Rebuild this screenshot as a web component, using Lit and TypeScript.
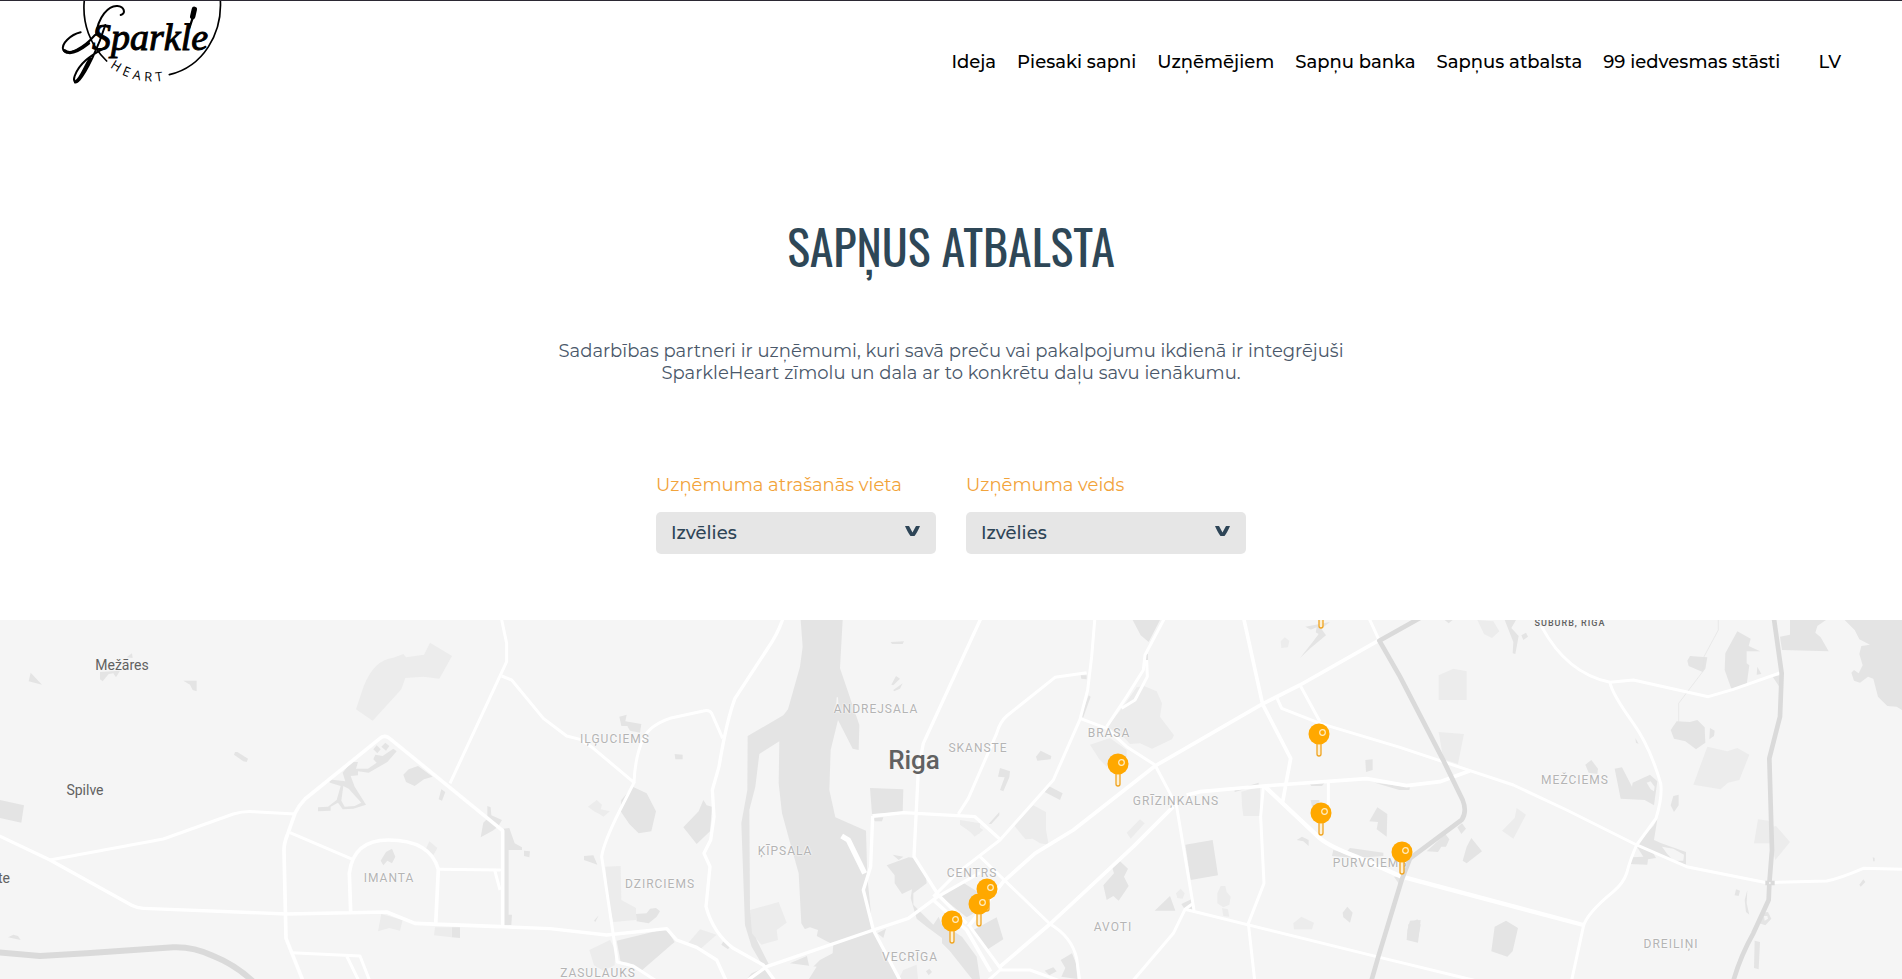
import { LitElement, html, svg, css } from "lit";

type Shape = { x: number; fill?: string; d: string };
type Road = { x: number; w: number; tone?: string; d: string };
type Place = { name: string; x: number; y: number; kind: string };

const GROUND = "#e4e4e4";
const PALE = "#ececec";
const LAND = "#f5f5f5";
const HIGHWAY = "#dadada";

/* Each map sheet is digitised at three units per pixel; x is the sheet's left edge. */
const areas: Shape[] = [
  { x: 0, fill: PALE, d: "M1290,98 L1356,138 L1318,206 L1270,200 L1216,204 L1204,238 L1118,332 L1068,298 L1090,232 Q1120,150 1180,143 L1210,132 L1218,142 L1272,134Z" },
  { x: 0, fill: GROUND, d: "M92,188 L126,224 L86,214Z M300,186 L360,182 L348,202 L340,190 L326,192 L308,214 L300,208Z M380,142 L396,130 L398,144Z M550,212 L590,212 L590,244 L578,240 L570,224Z M705,426 L712,426 L744,446 L740,456 L730,454 L702,434Z M0,570 L72,586 L64,638 L0,624Z M24,982 L40,974 L54,978 L62,990Z" },
  { x: 0, fill: GROUND, d: "M1120,418 L1130,406 L1142,418 L1132,430Z M1144,410 L1156,398 L1168,408 L1158,422Z M1180,416 L1190,424 L1162,456 L1106,488 L1074,484 L1074,496 L1052,498 L1064,530 L1098,584 L1060,596 L1028,598 L1014,578 L992,590 L992,602 L954,604 L954,592 L984,590 L1010,570 L1022,528 L990,518 L984,508 L1036,514 L1028,488 L1054,456 L1074,456 L1068,476 L1104,476 L1130,458 L1120,448 L1126,434 L1148,438Z" },
  { x: 0, fill: LAND, d: "M1030,528 L1046,536 L1084,578 L1064,588 L1034,590 L1024,572Z" },
  { x: 0, fill: GROUND, d: "M1210,494 L1226,478 L1254,468 L1298,500 L1272,508 L1244,528 L1218,516Z M1324,538 L1336,546 L1326,572 L1316,568Z M1462,588 L1472,592 L1474,616 L1506,630 L1494,650 L1478,662 L1442,682 L1450,638 L1462,626Z M1510,656 L1528,654 L1544,700 L1566,712 L1566,720 L1526,720 L1526,945 L1510,945Z M1176,716 L1186,740 L1176,760 L1162,752 L1150,766 L1142,752 L1158,726Z M1355,952 L1380,952 L1380,984 L1355,982Z M1522,914 L1536,914 L1534,945 L1518,945Z" },
  { x: 0, fill: PALE, d: "M1288,694 L1312,714 L1300,736 L1278,716Z M1144,912 L1208,930 L1200,962 L1168,954 L1134,964Z M1305,952 L1355,952 L1355,982 L1302,976Z" },
  { x: 500, fill: GROUND, d: "M902,30 L1028,30 L1020,175 L1078,345 L1076,420 L1058,416 L1014,330 L992,420 L988,540 L1006,622 L1098,662 L1102,800 L1118,960 L1200,1110 L925,1110 L950,1070 L870,1060 L1000,1004 L916,960 L904,940 L896,790 L868,690 L846,610 L836,520 L838,394 L778,432 L766,530 L748,600 L750,900 L770,990 L806,1062 L790,1070 L755,1010 L735,945 L724,640 L742,540 L743,378 L850,316 L864,298 L900,170 L908,110Z" },
  { x: 500, fill: GROUND, d: "M358,320 L380,314 L376,334 L424,342 L420,368 L390,362 L382,348 L364,348Z M524,432 L548,434 L548,448 L526,448Z M398,530 L440,550 L468,604 L454,664 L416,670 L388,642 L362,604 L364,570Z M610,570 L620,586 L636,590 L630,664 L590,702 L550,652 L596,604Z M252,738 L280,736 L292,764 L252,750Z M72,722 L90,724 L88,742 L72,738Z M282,932 L296,916 L286,936Z M408,912 L440,910 L450,896 L468,894 L480,904 L470,920 L446,940 L410,934Z M350,992 L498,956 L524,996 L514,1004 L424,1082 L384,1058 L362,1056Z M300,1016 L330,1010 L336,1062 L310,1052Z" },
  { x: 500, fill: PALE, d: "M264,590 L290,570 L306,584 L302,598 L330,604 L310,620 L298,612 L282,604Z M316,770 L362,768 L364,870 L408,894 L408,930 L340,936 L326,880Z M268,1020 L330,990 L346,1020 L344,1066 L310,1082 L282,1066Z M600,958 L650,974 L602,1016 L564,1000Z M750,900 L836,876 L860,938 L830,960 L834,990 L784,1004 L756,970Z M1380,630 L1440,640 L1440,670 L1425,676 L1380,644Z M1210,1080 L1250,1064 L1254,1107 L1196,1107Z" },
  { x: 500, fill: GROUND, d: "M1172,96 L1212,94 L1208,102 L1176,102Z M1174,224 L1188,198 L1200,206 L1180,226Z M1180,240 L1208,220 L1200,236 L1182,244Z M1110,534 L1210,538 L1208,606 L1116,612Z M1120,624 L1150,622 L1146,634 L1124,634Z M1160,766 L1226,742 L1244,744 L1278,800 L1280,820 L1240,850 L1240,884 L1300,944 L1316,920 L1324,940 L1386,980 L1430,1040 L1440,1107 L1416,1107 L1350,1024 L1326,1000 L1326,984 L1280,950 L1250,926 L1232,864 L1236,838 L1206,852 L1184,820 L1184,796Z M1178,734 L1210,740 L1196,750Z M1320,858 L1386,816 L1440,850 L1440,900 L1400,922Z M1132,970 L1158,956 L1150,984Z M1278,1084 L1288,1076 L1296,1086 L1286,1096Z M670,994 L690,1010 L684,1018 L664,1004Z M755,1090 L800,1070 L820,1107 L740,1107Z" },
  { x: 500, fill: LAND, d: "M880,970 L930,952 L954,960 L950,980 L900,992 L880,984Z M920,1035 L1000,1000 L998,1030 L960,1050 L930,1080Z M1010,262 L1014,262 L1016,296 L1008,296Z" },
  { x: 940, fill: PALE, d: "M590,232 L612,228 L650,244 L666,280 L660,320 L702,376 L696,388 L636,416 L600,400 L570,402 L546,376 L500,350 L545,296Z M450,404 L510,384 L560,420 L560,440 L500,470 L478,448Z M222,646 L280,586 L318,606 L318,660 L326,704 L300,700 L278,686 L256,688Z M560,668 L600,628 L614,640 L572,686Z M904,545 L960,530 L960,618 L910,618 L906,586Z M832,850 L842,828 L856,828 L860,846 L872,860 L868,884 L850,892 L832,880Z M846,894 L864,898 L868,920 L850,918Z M708,850 L722,836 L734,850 L728,866 L712,864Z M1022,94 L1034,82 L1048,92 L1044,112 L1024,114Z M1060,940 L1084,920 L1122,938 L1116,958 L1062,958Z M60,632 L100,640 L130,660 L104,680Z" },
  { x: 940, fill: GROUND, d: "M578,30 L660,30 L626,96 L602,76Z M618,132 L624,132 L624,152 L618,152Z M422,196 L440,196 L440,208 L424,206Z M446,256 L452,260 L430,322 L422,320Z M288,440 L302,422 L334,438 L332,448 L292,452Z M180,474 L210,484 L208,502 L190,544 L180,540 L194,502 L174,500Z M326,528 L368,550 L360,570 L314,546Z M146,642 L178,606 L178,616 L154,642Z M1096,50 L1170,36 L1144,56 L1158,76 L1112,114 L1080,144 L1118,96 L1136,72Z M1110,522 L1156,516 L1146,528 L1114,528Z M1112,570 L1138,570 L1138,590 L1116,590Z M1276,450 L1298,448 L1298,480 L1278,486Z M1288,634 L1312,592 L1342,612 L1340,680 L1310,658 L1314,636Z M1070,690 L1086,680 L1106,690 L1106,708 L1090,694Z M1180,720 L1216,730 L1230,714 L1330,728 L1330,738 L1250,744 L1176,738Z M736,704 L818,690 L834,796 L752,810Z M536,750 L564,776 L552,800 L566,828 L536,872 L520,858 L500,870 L490,826 L522,790 L516,770Z M690,858 L706,902 L644,902Z M724,882 L754,868 L758,900 L736,900Z M362,1050 L396,1030 L408,1060 L412,1107 L364,1100 L376,1074Z M100,960 L170,922 L190,988 L140,1020Z M1208,908 L1222,890 L1238,908 L1230,938 L1210,922Z M1402,960 L1410,932 L1442,930 L1434,998 L1400,990Z M884,540 L956,518 L956,526 L884,546Z M1304,518 L1410,532 L1408,540 L1378,540Z M1362,800 L1400,800 L1380,826Z M314,1082 L340,1072 L350,1084 L328,1096Z" },
  { x: 940, fill: LAND, d: "M1110,60 L1130,52 L1126,74Z" },
  { x: 1400, fill: PALE, d: "M116,196 L160,176 L200,184 L200,270 L116,270Z M116,366 L192,372 L174,462 L130,448Z M922,410 L982,424 L1012,414 L1048,434 L1018,510 L984,518 L962,538 L880,524Z M350,594 L378,614 L340,686 L306,662 L344,624Z M1074,628 L1106,632 L1114,652 L1128,648 L1170,696 L1126,750 L1112,700 L1062,700Z M232,30 L280,34 L298,64 L276,84 L252,72Z" },
  { x: 1400, fill: GROUND, d: "M314,30 L348,30 L334,54 L356,78 L346,132 L338,130 L340,96Z M364,76 L378,68 L384,80 L370,90Z M862,152 L870,138 L922,142 L916,176 L908,186 L866,168Z M1012,64 L1052,86 L1046,108 L1080,124 L1040,124 L1040,160 L1048,166 L1040,224 L994,236 L974,180 L976,130Z M1072,170 L1084,192 L1070,194Z M1118,200 L1140,196 L1138,230Z M1170,30 L1278,30 L1252,48 L1246,68 L1262,82 L1286,124 L1146,120 L1140,80 L1170,74Z M1334,30 L1506,30 L1506,300 L1490,290 L1462,288 L1434,260 L1420,206 L1404,200 L1380,218 L1362,212 L1354,188 L1362,180 L1376,190 L1388,166 L1378,132 L1384,108 L1410,104 L1378,88 L1364,60Z M812,360 L830,334 L870,336 L892,330 L914,352 L916,398 L888,418 L856,394 L822,386Z M930,354 L944,362 L942,378 L928,388Z M820,558 L836,554 L836,586 L822,606 L812,586Z M556,464 L574,450 L594,476 L592,492 L566,488Z M644,476 L666,472 L696,530 L698,518 L750,494 L772,514 L762,586 L734,570 L662,566Z M760,648 L772,628 L762,690 L784,700 L858,726 L858,764 L830,756 L760,730 L768,744 L744,748 L742,764 L688,762 L696,742 L730,740 L708,706Z M214,684 L246,724 L200,760 L188,752 L200,710Z M80,724 L136,672 L148,688 L138,710 L124,710 L114,726Z M172,652 L186,640 L198,656 L184,672Z M318,932 L354,954 L338,1024 L322,1040 L274,1024 L284,950Z M24,944 L52,928 L62,944 L52,996 L20,988 L30,970Z M1008,838 L1020,842 L1016,858 L1004,856Z M1042,840 L1040,880 L1048,914 L1038,906 L1034,870Z M1064,992 L1080,996 L1076,1078 L1062,1074Z M1086,908 L1104,906 L1114,926 L1096,946 L1078,940Z M1390,808 L1396,816 L1382,830 L1378,824Z M1418,742 L1424,744 L1424,754 L1420,754Z M134,30 L158,30 L146,40Z M706,384 L716,402 L708,398Z" },
  { x: 1400, fill: LAND, d: "M740,518 L752,514 L764,530 L762,544 L752,538Z M786,710 L820,716 L852,734 L850,752 L820,752 L800,730Z M1092,918 L1102,918 L1104,926 L1094,932Z" },
];

const roads: Road[] = [
  { x: 0, w: 18, tone: HIGHWAY, d: "M-10,1027 L120,1038 L260,1030 L520,1012 Q580,1010 640,1038 Q710,1066 765,1120" },
  { x: 1400, w: 2, tone: "#e2e2e2", d: "M955,20 L955,60 L912,140 L908,185 L836,280 L836,335" },
  { x: 0, w: 10, d: "M-10,674 L150,750 L395,886 Q410,894 430,895 L860,912" },
  { x: 0, w: 9, d: "M150,750 L490,687 L700,612 Q730,603 760,605 L885,612 M870,668 L1058,748 M1315,778 L1500,780 L1484,780 L1500,840 M1503,20 L1520,100 L1520,155 L1350,520 M875,1028 L1080,1038 L1112,1120 M1040,1038 L1080,1120" },
  { x: 0, w: 11, d: "M912,1120 L858,985 L852,720 Q852,700 862,675 L885,610 Q895,588 915,567 L1140,385 Q1150,375 1165,382 L1508,662 L1508,950 M860,912 L1160,906 L1245,940 L1500,950 M1052,905 L1048,790 Q1060,690 1165,690 Q1290,690 1315,778 L1307,945" },
  { x: 500, w: 10, d: "M0,950 L150,956 L320,975 L500,956 L530,990 L590,1012 L650,1050 L682,1120" },
  { x: 500, w: 9, d: "M5,198 L35,210 L130,325 L200,378 L240,388 L280,415 L405,520 M668,385 L635,310 Q628,298 610,303 L510,325 Q450,345 430,385 Q405,440 402,518 L360,600 Q310,700 305,740 L352,1056 L400,1068 L480,1120" },
  { x: 500, w: 10, d: "M850,22 Q835,70 800,120 L705,265 Q680,330 657,470 L637,540 L642,620 L632,690 L612,730 L630,770 L618,890 Q640,970 700,1015 L790,1065 L830,1120 M730,1120 L800,1070 L1120,960 L1225,925 L1310,862 L1440,788 M1118,618 L1112,770 L1090,840 L1120,960 L1205,1120 M1118,618 L1210,608 L1425,620 L1500,688 M1445,20 L1270,400 L1255,480 L1242,740 L1315,855 L1400,940" },
  { x: 500, w: 16, d: "M1025,678 L1045,690 L1094,790" },
  { x: 940, w: 9, d: "M55,612 L85,565 L170,370 Q180,335 200,318 L345,202 L440,188 M465,20 L455,140 L443,240 L420,328 L340,510 L180,690 L50,790 L-20,860 M420,325 L500,355 L560,410 L645,465 M675,22 L615,135 L610,180 L560,260 L500,350 M620,150 L622,200 L585,270 L545,295 M1010,262 L1025,295 L1140,340 L1380,412 L1590,482 L1720,525 L1880,600 L2090,705 L2240,770 L2480,818 L2660,813 Q2700,805 2770,775 L2910,778 M1080,225 L1140,335 M1165,515 L1165,600 M970,530 L962,620 L972,820 L925,940 L945,1120 M735,898 L1310,1040 L1640,1120 M760,880 L735,898 L700,970 L572,1120 M120,740 L330,942 Q395,980 410,1045 L420,1120 M90,950 L185,1080 M135,1120 L180,1080 L270,1080 L380,1120 M1285,20 L1318,92 M645,465 L690,550 L710,590 L762,900" },
  { x: 940, w: 11, d: "M1315,92 L1080,225 L965,283 L645,468 L400,660 L285,730 L190,815 L85,950 M910,20 L968,283 L1052,445 L1028,575 M700,590 L580,710 L330,942 L180,1070 M740,555 L780,545 L970,528 L1280,506 L1400,527 L1500,515 L1590,482 M-20,870 L80,960 L152,1085" },
  { x: 940, w: 13, d: "M975,530 L1140,685 Q1170,710 1250,740 L1385,800 L1930,945" },
  { x: 1400, w: 9, d: "M425,50 Q500,190 630,217 L700,210 L925,260 L1000,238 L1142,188 M630,217 Q635,250 700,340 Q750,410 782,520 Q788,560 768,625 L710,705 Q690,750 680,790 Q670,820 640,845 Q560,910 550,950 L513,1120" },
  { x: 940, w: 14, tone: HIGHWAY, d: "M1440,24 L1318,92 L1380,200 L1512,455 L1568,570 Q1582,605 1565,630 L1410,745 L1385,810 L1315,1040 L1292,1120" },
  { x: 1400, w: 14, tone: HIGHWAY, d: "M1121,20 L1145,190 L1140,320 L1108,445 L1116,720 L1108,820 L1106,870 L1060,970 Q1020,1040 998,1120 M1096,819 L1124,819" },
  { x: 1400, w: 4, d: "M1107,819 L1112,819" },
];

const places: Place[] = [
  { name: "Mežāres", x: 122, y: 45, kind: "village" },
  { name: "Spilve", x: 85, y: 170, kind: "village" },
  { name: "te", x: 4, y: 258, kind: "village" },
  { name: "Riga", x: 914, y: 140, kind: "city" },
  { name: "SUBURB, RIGA", x: 1570, y: 3, kind: "suburb" },
  { name: "IMANTA", x: 389, y: 258, kind: "quarter" },
  { name: "IĻĢUCIEMS", x: 615, y: 119, kind: "quarter" },
  { name: "ANDREJSALA", x: 876, y: 89, kind: "quarter" },
  { name: "ĶĪPSALA", x: 785, y: 231, kind: "quarter" },
  { name: "DZIRCIEMS", x: 660, y: 264, kind: "quarter" },
  { name: "ZASULAUKS", x: 598, y: 353, kind: "quarter" },
  { name: "VECRĪGA", x: 910, y: 337, kind: "quarter" },
  { name: "SKANSTE", x: 978, y: 128, kind: "quarter" },
  { name: "BRASA", x: 1109, y: 113, kind: "quarter" },
  { name: "GRĪZIŅKALNS", x: 1176, y: 181, kind: "quarter" },
  { name: "CENTRS", x: 972, y: 253, kind: "quarter" },
  { name: "AVOTI", x: 1113, y: 307, kind: "quarter" },
  { name: "PURVCIEMS", x: 1370, y: 243, kind: "quarter" },
  { name: "MEŽCIEMS", x: 1575, y: 160, kind: "quarter" },
  { name: "DREILIŅI", x: 1671, y: 324, kind: "quarter" },
];

const pins = [[1321, -14], [1319, 114], [1118, 144], [1321, 193], [1402, 232], [987, 269], [979, 284], [952, 301]];

const links = ["Ideja", "Piesaki sapni", "Uzņēmējiem", "Sapņu banka", "Sapņus atbalsta", "99 iedvesmas stāsti"];

class SiteHeader extends LitElement {
  static styles = css`
    :host { display: block; }
    header { display: flex; justify-content: space-between; align-items: flex-start; border-top: 1px solid #2b2833; padding: 0 61px 0 40px; }
    .logo { display: block; color: #000; }
    .logo svg { display: block; }
    .ink { fill: none; stroke: #000; stroke-linecap: round; }
    .script { font: italic 400 38px "Liberation Serif", serif; stroke: #000; stroke-width: 1px; }
    .heart { font: 13px "Open Sans", sans-serif; letter-spacing: 4px; }
    nav { display: flex; align-items: center; gap: 38px; padding-top: 50px; }
    ul { display: flex; gap: 21px; list-style: none; margin: 0; padding: 0; }
    a { font: 500 18px/22px Montserrat, sans-serif; color: #000; text-decoration: none; }
  `;
  render() {
    return html`
      <header>
        <a class="logo" href="#" aria-label="Sparkle Heart">
          <svg width="200" height="90" viewBox="0 1 200 90">
            <path id="ring" fill="none" d="M70,67 A70,70 0 0 0 140,76" />
            <g transform="scale(.33333)">
              <path class="ink" stroke-width="5" d="M133,0 C126,70 150,135 200,183 M541,0 C547,100 490,200 388,224" />
              <path class="ink" stroke-width="6" d="M122,97 C92,104 62,132 70,150 C80,170 130,146 165,105" />
              <path class="ink" stroke-width="9" d="M74,152 C88,166 118,152 146,130" />
              <path class="ink" stroke-width="6" d="M196,75 C176,140 140,215 118,240 C108,254 98,244 104,228 C118,190 150,168 190,146 M168,105 C174,50 206,16 232,18 C254,20 258,40 242,45" />
              <path class="ink" stroke-width="9" d="M106,246 C122,238 132,206 150,176" />
              <path class="ink" stroke-width="7" d="M458,54 L448,84" />
              <path class="ink" stroke-width="16" d="M463,28 L458,50" />
            </g>
            <text class="script" x="52" y="50">Sparkle</text>
            <text class="heart"><textPath href="#ring">HEART</textPath></text>
          </svg>
        </a>
        <nav>
          <ul>${links.map((l) => html`<li><a href="#">${l}</a></li>`)}</ul>
          <a href="#">LV</a>
        </nav>
      </header>`;
  }
}
customElements.define("site-header", SiteHeader);

class FilterField extends LitElement {
  static properties = { label: {} };
  declare label: string;
  static styles = css`
    :host { display: flex; flex-direction: column; gap: 16px; width: 280px; font: 400 18px/22px Montserrat, sans-serif; }
    label { color: #f2a33a; }
    .box { display: grid; align-items: center; }
    select, svg { grid-area: 1 / 1; }
    select { appearance: none; width: 100%; height: 42px; border: 0; border-radius: 5px; padding: 0 40px 0 15px; background: #e6e6e6; color: #2e4557; font: 500 18px/22px Montserrat, sans-serif; }
    svg { justify-self: end; margin: 0 16px 4px 0; pointer-events: none; }
  `;
  render() {
    return html`
      <label for="choice">${this.label}</label>
      <div class="box">
        <select id="choice"><option>Izvēlies</option></select>
        <svg width="15" height="11" viewBox="0 0 15 11"><path fill="#2e4557" d="M0,0 H4 L7.5,6.5 L11,0 H15 Q12,7 9.5,10 H5.500 Q3,7 0,0Z" /></svg>
      </div>`;
  }
}
customElements.define("filter-field", FilterField);

class PartnerMap extends LitElement {
  static styles = css`
    :host { display: flex; justify-content: center; overflow: hidden; background: #f5f5f5; font-family: Roboto, sans-serif; }
    .sheet { position: relative; flex: none; }
    .terrain { display: block; }
    .place { position: absolute; transform: translate(-50%, -50%); white-space: nowrap; line-height: 16px; }
    .village { font-size: 14px; color: #616161; }
    .city { font-size: 26px; font-weight: 500; line-height: 30px; color: #616161; }
    .suburb { font-size: 9px; font-weight: 500; letter-spacing: 1px; color: #616161; }
    .quarter { font-size: 12px; letter-spacing: 1px; color: #b4b4b4; text-shadow: 0 0 2px #fff, 0 0 2px #fff; }
    .pin { position: absolute; padding: 0; border: 0; background: none; cursor: pointer; transform: translate(-50%, -11px); }
    .pin svg { display: block; }
  `;
  render() {
    return html`
      <div class="sheet">
        <svg class="terrain" width="1902" height="359" viewBox="0 0 1902 359">
          ${areas.map((a) => svg`<path transform="translate(${a.x},-10) scale(.33333)" fill=${a.fill} d=${a.d} />`)}
          ${roads.map((r) => svg`<path transform="translate(${r.x},-10) scale(.33333)" fill="none" stroke=${r.tone ?? "#fff"} stroke-width=${r.w} stroke-linejoin="round" d=${r.d} />`)}
        </svg>
        ${places.map((p) => html`<span class="place ${p.kind}" style="left:${p.x}px;top:${p.y}px">${p.name}</span>`)}
        ${pins.map(([x, y]) => html`
          <button class="pin" aria-label="Partneris" style="left:${x}px;top:${y}px">
            <svg width="22" height="34" viewBox="0 0 22 34">
              <rect x="9" y="18" width="4" height="15" rx="2" fill="#fdf0d4" stroke="#f0a420" stroke-width="1.3" />
              <circle cx="11" cy="11" r="10.5" fill="#ffa800" />
              <circle cx="14.5" cy="9.5" r="2.8" fill="none" stroke="#ffeec4" stroke-width="1.2" />
            </svg>
          </button>`)}
      </div>`;
  }
}
customElements.define("partner-map", PartnerMap);

class AppRoot extends LitElement {
  static styles = css`
    :host { display: flex; flex-direction: column; min-height: 100vh; background: #fff; color: #2e4557; }
    main { display: flex; flex-direction: column; align-items: center; flex: 1; }
    h1 { margin: 119px 0 0; font: 400 48px/72px Oswald, sans-serif; color: #2e4757; }
    p { margin: 58px 20px 0; max-width: 800px; text-align: center; font: 400 18px/22px Montserrat, sans-serif; color: #4a586a; }
    form { display: flex; flex-wrap: wrap; justify-content: center; gap: 30px; margin: 90px 20px 66px; }
    partner-map { align-self: stretch; flex: 1; }
  `;
  render() {
    return html`
      <site-header></site-header>
      <main>
        <h1>SAPŅUS ATBALSTA</h1>
        <p>Sadarbības partneri ir uzņēmumi, kuri savā preču vai pakalpojumu ikdienā ir integrējuši SparkleHeart zīmolu un dala ar to konkrētu daļu savu ienākumu.</p>
        <form>
          <filter-field label="Uzņēmuma atrašanās vieta"></filter-field>
          <filter-field label="Uzņēmuma veids"></filter-field>
        </form>
        <partner-map></partner-map>
      </main>`;
  }
}
customElements.define("app-root", AppRoot);
